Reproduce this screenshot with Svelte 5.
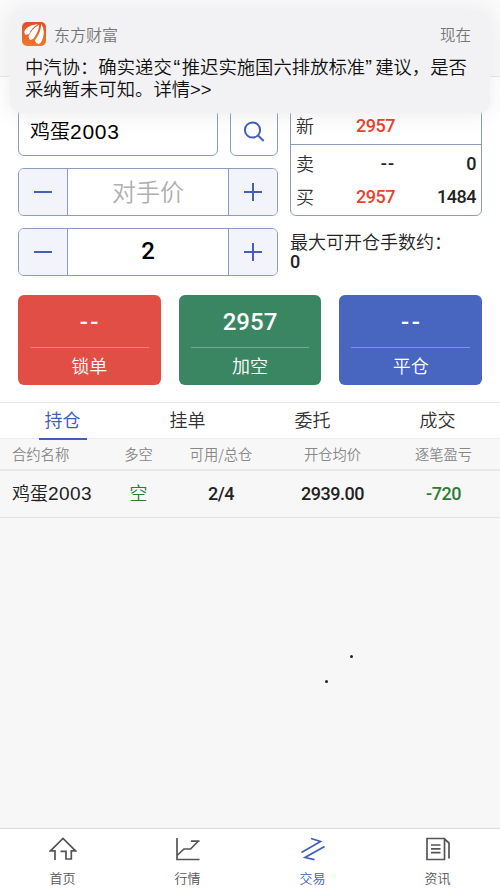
<script lang="ts">
  let activeTab = $state(0);
  let lots = $state(2);

  const tabs = ['持仓', '挂单', '委托', '成交'];

  const actions = [
    { kind: 'lock', price: '--', label: '锁单' },
    { kind: 'short', price: '2957', label: '加空' },
    { kind: 'close', price: '--', label: '平仓' }
  ];

  const positions = [
    { name: '鸡蛋', code: '2003', side: '空', volume: '2/4', avg: '2939.00', profit: '-720' }
  ];
</script>

{#snippet minus()}
  <svg width="18" height="18" viewBox="0 0 18 18"><path d="M0 9H18" /></svg>
{/snippet}

{#snippet plus()}
  <svg width="18" height="18" viewBox="0 0 18 18"><path d="M0 9H18M9 0V18" /></svg>
{/snippet}

<div class="page">
  <header class="navbar"></header>

  <section class="order">
    <div class="form">
      <div class="contract-row">
        <div class="contract">鸡蛋<span class="code">2003</span></div>
        <button class="search" aria-label="搜索">
          <svg width="22" height="22" viewBox="0 0 22 22"><circle cx="9.5" cy="9" r="7.6" /><path d="M14.8 14.3L20.7 20" /></svg>
        </button>
      </div>
      <div class="stepper">
        <button aria-label="减价">{@render minus()}</button>
        <span class="value placeholder">对手价</span>
        <button aria-label="加价">{@render plus()}</button>
      </div>
      <div class="stepper">
        <button aria-label="减少" onclick={() => (lots = Math.max(1, lots - 1))}>{@render minus()}</button>
        <span class="value num">{lots}</span>
        <button aria-label="增加" onclick={() => lots++}>{@render plus()}</button>
      </div>
    </div>

    <div class="side">
      <div class="quote">
        <div class="quote-row last"><span>新</span><b class="up">2957</b><b></b></div>
        <div class="quote-row ask"><span>卖</span><b class="empty">--</b><b>0</b></div>
        <div class="quote-row bid"><span>买</span><b class="up">2957</b><b>1484</b></div>
      </div>
      <div class="max-lots"><span>最大可开仓手数约：</span><b>0</b></div>
    </div>
  </section>

  <section class="actions">
    {#each actions as action}
      <button class="action {action.kind}">
        <span class="price" class:empty={action.price === '--'}>{action.price}</span>
        <span class="label">{action.label}</span>
      </button>
    {/each}
  </section>

  <nav class="tabs">
    {#each tabs as tab, i}
      <button class:active={activeTab === i} onclick={() => (activeTab = i)}><span>{tab}</span></button>
    {/each}
  </nav>

  <section class="positions">
    <div class="grid head">
      <span>合约名称</span><span>多空</span><span>可用/总仓</span><span>开仓均价</span><span>逐笔盈亏</span>
    </div>
    {#each positions as p}
      <div class="grid row">
        <span class="name">{p.name}<i class="code">{p.code}</i></span>
        <span class="down">{p.side}</span>
        <span class="num">{p.volume}</span>
        <span class="num">{p.avg}</span>
        <span class="num down">{p.profit}</span>
      </div>
    {/each}
    <i class="speck first"></i>
    <i class="speck second"></i>
  </section>

  <footer class="tabbar">
    <div class="item">
      <svg width="28" height="24" viewBox="0 0 28 24"><path d="M6 23V13.8H1.5L14 1.5L26.5 13.8H22.3V22H17V14.3H11.5" /></svg>
      <span>首页</span>
    </div>
    <div class="item">
      <svg width="28" height="24" viewBox="0 0 28 24"><path d="M3 1V22.5H25.5M3.5 18L10 12H16.5L24 4.5M17 4.2H25.5" /></svg>
      <span>行情</span>
    </div>
    <div class="item active">
      <svg width="28" height="24" viewBox="0 0 28 24"><path d="M12 1.5L21.5 4.5L2.5 15.5M25.5 9.5L6 20.5L15.5 22.7" /></svg>
      <span>交易</span>
    </div>
    <div class="item">
      <svg width="28" height="24" viewBox="0 0 28 24"><path d="M3 1.5H20.5V22.5H3ZM7 8H16.5M7 11.8H16.5M7 15.7H16.5M20.5 2L25 6V21.5" /></svg>
      <span>资讯</span>
    </div>
  </footer>

  <aside class="banner">
    <div class="banner-head">
      <svg width="24" height="24" viewBox="0 0 24 24">
        <defs>
          <linearGradient id="logo" x1="0" y1="0" x2="0" y2="1">
            <stop offset="0" stop-color="#dd5028" />
            <stop offset="1" stop-color="#f1782b" />
          </linearGradient>
        </defs>
        <rect width="24" height="24" rx="5" fill="url(#logo)" />
        <path d="M16 2.3C9 2.5 4 5.5 2.3 9.5Q2.2 11.5 3.5 13L7.2 12C8.500 8 11.500 4.500 16 2.300Z" fill="#fff" />
        <path d="M17.2 2.8C12 5.5 8.500 9.500 6.500 14.500Q6.600 16.800 8.500 18L11.500 16.800C14.500 12 17 8 17.200 2.800Z" fill="#fff" />
        <path d="M19 2C19.300 8 16.500 13 12.800 18.500Q13.500 21 16.500 22L18.500 21C22.500 15 23 7 19 2Z" fill="#fff" />
      </svg>
      <span class="app-name">东方财富</span>
      <span class="when">现在</span>
    </div>
    <p>中汽协：确实递交<q>推迟实施国六排放标准</q>建议，是否<br />采纳暂未可知。详情<span class="more">&gt;&gt;</span></p>
  </aside>
</div>

<style>
:global(body) {
  background: #f7f7f7;
}
.page {
  position: relative;
  box-sizing: border-box;
  width: 500px;
  height: 888px;
  overflow: hidden;
  display: flex;
  flex-direction: column;
  background: #fff;
  color: #222;
  font-family: 'Noto Sans CJK SC', sans-serif;
  font-weight: 350;
}
.page * {
  box-sizing: border-box;
}
button {
  padding: 0;
  border: 0;
  background: none;
  color: inherit;
  font: inherit;
}
svg {
  display: block;
  flex: none;
}
b, .num, .price {
  font-family: Roboto, sans-serif;
  font-weight: 500;
}
.navbar {
  height: 77px;
  background: #fafafa;
  border-bottom: 1px solid #e6e6e6;
}
.order {
  display: flex;
  gap: 12px;
  height: 217.5px;
  padding: 30px 18px 0;
}
.form {
  width: 260px;
  display: flex;
  flex-direction: column;
  gap: 12px;
}
.contract-row {
  display: flex;
  gap: 12px;
}
.contract, .search {
  height: 49px;
  border: 1px solid #8d9bc3;
  border-radius: 6px;
}
.contract {
  width: 200px;
  padding-left: 11px;
  line-height: 45px;
  font-size: 20px;
  color: #000;
}
.code {
  font-family: 'Liberation Sans', sans-serif;
  font-style: normal;
  font-weight: 400;
  font-size: 21px;
  letter-spacing: .7px;
}
.search {
  flex: 1;
  display: flex;
  align-items: center;
  justify-content: center;
}
.search svg, .stepper svg {
  fill: none;
  stroke: #4460b8;
  stroke-width: 2;
}
.stepper {
  display: flex;
  height: 48px;
  border: 1px solid #8d9bc3;
  border-radius: 6px;
  overflow: hidden;
}
.stepper button {
  width: 48px;
  display: flex;
  align-items: center;
  justify-content: center;
  background: #f3f4fb;
}
.value {
  flex: 1;
  border: solid #8d9bc3;
  border-width: 0 1px;
  line-height: 44px;
  text-align: center;
  font-size: 24px;
  color: #000;
}
.value.placeholder {
  color: #b0b0b0;
}
.side {
  flex: 1;
}
.quote {
  height: 109px;
  border: 1px solid #8d9bc3;
  border-radius: 6px;
}
.quote-row {
  display: grid;
  grid-template-columns: 30px 69px 1fr;
  align-items: center;
  height: 33px;
  padding: 0 5px;
  font-size: 18px;
  color: #333;
}
.quote-row span {
  margin-top: -2px;
}
.quote-row.last {
  height: 37px;
  border-bottom: 1px solid #8d9bc3;
}
.quote-row.last b {
  margin-top: -2px;
}
.quote-row.ask {
  margin-top: 2px;
}
.quote-row b {
  text-align: right;
  font-size: 18px;
  letter-spacing: -.5px;
  color: #222;
}
.quote-row b.empty {
  letter-spacing: 1px;
}
.quote-row b.up {
  color: #e9432d;
}
.max-lots {
  display: flex;
  flex-direction: column;
  margin-top: 12px;
  font-size: 18px;
  line-height: 26px;
  white-space: nowrap;
}
.max-lots b {
  font-size: 18px;
  line-height: 15px;
}
.actions {
  display: grid;
  grid-template-columns: repeat(3, 1fr);
  gap: 18px;
  padding: 0 18px;
  height: 107px;
}
.action {
  display: flex;
  flex-direction: column;
  height: 90px;
  padding: 0 12px;
  border-radius: 6px;
  color: #fff;
}
.action.lock { background: #e14e45; }
.action.short { background: #3a8663; }
.action.close { background: #4866c0; }
.price {
  width: 100%;
  height: 53px;
  border-bottom: 1px solid rgba(255, 255, 255, .3);
  line-height: 55px;
  font-size: 24px;
}
.price.empty {
  letter-spacing: 2.5px;
  text-indent: 2px;
}
.label {
  width: 100%;
  line-height: 34px;
  font-size: 18px;
}
.tabs {
  display: grid;
  grid-template-columns: repeat(4, 1fr);
  height: 37px;
  border-top: 1.5px solid #e8e8e8;
  border-bottom: 1px solid #ececec;
}
.tabs button {
  display: flex;
  justify-content: center;
  font-size: 18px;
  line-height: 33px;
  color: #333;
}
.tabs span {
  position: relative;
  z-index: 1;
  width: 48px;
  height: 37px;
}
.tabs .active {
  color: #3f5fbc;
  font-weight: 400;
}
.tabs .active span {
  border-bottom: 2px solid #3f5fbc;
}
.positions {
  position: relative;
  flex: 1;
  background: #f7f7f7;
}
.grid {
  display: grid;
  grid-template-columns: 105px 67px 98px 125px 97px;
  align-items: center;
  text-align: center;
}
.grid > :first-child {
  padding-left: 12px;
  text-align: left;
}
.head {
  height: 32px;
  padding-bottom: 1px;
  border-bottom: 2px solid #e9e9e9;
  font-size: 14.3px;
  color: #888;
}
.row {
  height: 47px;
  border-bottom: 1px solid #e3e3e3;
  font-size: 18px;
}
.row .name, .row .down:not(.num) {
  margin-top: -3px;
}
.row .code {
  font-size: 19px;
  letter-spacing: .4px;
}
.row .num {
  margin-top: -1px;
  letter-spacing: -.5px;
}
.down {
  color: #2d7c36;
}
.speck {
  position: absolute;
  width: 3px;
  height: 3px;
  border-radius: 50%;
  background: #222;
}
.speck.first {
  left: 350px;
  top: 216px;
}
.speck.second {
  left: 325px;
  top: 241px;
}
.tabbar {
  display: grid;
  grid-template-columns: repeat(4, 1fr);
  height: 60px;
  border-top: 1px solid #dcdcdc;
  background: #fff;
}
.item {
  display: flex;
  flex-direction: column;
  align-items: center;
  padding-top: 8px;
  font-size: 13px;
  color: #555;
}
.item svg {
  fill: none;
  stroke: #555;
  stroke-width: 1.7;
}
.item span {
  margin-top: 7px;
  line-height: 20px;
}
.item.active {
  color: #3f5fbc;
}
.item.active svg {
  stroke: #3f5fbc;
}
.banner {
  position: absolute;
  z-index: 2;
  left: 10px;
  top: 10px;
  width: 480px;
  height: 103px;
  padding: 12px 19px 0 12px;
  border-radius: 12px;
  background: #f2f2f4;
  box-shadow: 0 0 5px rgba(242, 242, 244, .9), 0 2px 26px rgba(0, 0, 0, .07);
}
.banner-head {
  display: flex;
  align-items: center;
  height: 24px;
}
.app-name {
  margin-left: 8px;
  font-size: 16px;
  color: #777;
}
.when {
  margin-left: auto;
  font-size: 15.5px;
  color: #777;
}
.banner p {
  margin: 9px 0 0 3px;
  font-size: 18.35px;
  line-height: 22px;
  white-space: nowrap;
  color: #111;
}
q {
  quotes: none;
}
q::before, q::after {
  display: inline-block;
  width: 10px;
  height: 16px;
  line-height: 16px;
  font-family: 'Liberation Sans', sans-serif;
  font-size: 20px;
}
q::before {
  content: '“';
  text-align: center;
}
q::after {
  content: '”';
}
.more {
  font-family: 'Liberation Sans', sans-serif;
  line-height: 1;
}
</style>
